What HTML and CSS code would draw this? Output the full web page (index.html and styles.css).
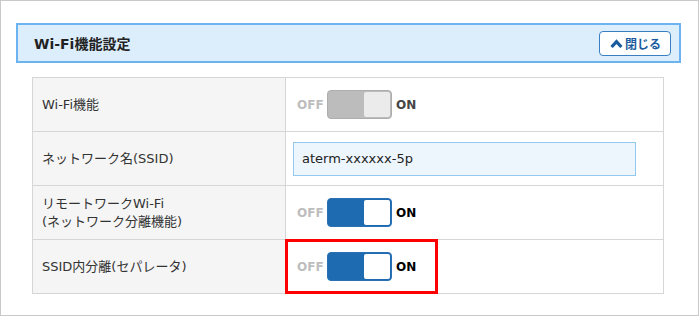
FILE: index.html
```html
<!DOCTYPE html>
<html lang="ja">
<head>
<meta charset="utf-8">
<link rel="stylesheet" href="styles.css">
</head>
<body>
<div class="frame">
  <div class="panel-header">
    <h2 class="panel-title">Wi-Fi機能設定</h2>
    <button class="close-btn" type="button">
      <svg class="chev" width="13" height="9" viewBox="0 0 13 9"><polyline points="1.6,8 6.5,2.6 11.4,8" fill="none" stroke="#1b5c9e" stroke-width="3.2" stroke-linejoin="miter"/></svg>
      <span>閉じる</span>
    </button>
  </div>
  <table class="settings">
    <tr>
      <th>Wi-Fi機能</th>
      <td>
        <div class="toggle">
          <span class="off">OFF</span>
          <span class="switch gray"><span class="knob"></span></span>
          <span class="on dim">ON</span>
        </div>
      </td>
    </tr>
    <tr>
      <th>ネットワーク名(SSID)</th>
      <td><div class="ssid">aterm-xxxxxx-5p</div></td>
    </tr>
    <tr>
      <th><span class="two-line">リモートワークWi-Fi<br>(ネットワーク分離機能)</span></th>
      <td>
        <div class="toggle">
          <span class="off">OFF</span>
          <span class="switch blue"><span class="knob"></span></span>
          <span class="on">ON</span>
        </div>
      </td>
    </tr>
    <tr>
      <th>SSID内分離(セパレータ)</th>
      <td class="marked">
        <div class="toggle">
          <span class="off">OFF</span>
          <span class="switch blue"><span class="knob"></span></span>
          <span class="on">ON</span>
        </div>
        <span class="highlight"></span>
      </td>
    </tr>
  </table>
</div>
</body>
</html>
```

FILE: styles.css
```css
* { box-sizing: border-box; }
html, body { margin: 0; padding: 0; background: #fff; }
body {
  font-family: "DejaVu Sans", "Noto Sans CJK JP", sans-serif;
  color: #333;
}
.frame {
  width: 699px;
  height: 316px;
  border: 1px solid #c9c9c9;
  padding: 22px 0 0 15px;
}
.panel-header {
  width: 665px;
  height: 40px;
  border: 2px solid #6cb4f1;
  background: #dcedfc;
  display: flex;
  align-items: center;
  justify-content: space-between;
  padding: 0 8px 0 16px;
}
.panel-title {
  margin: 0;
  font-size: 14px;
  font-weight: bold;
  color: #222;
}
.close-btn {
  width: 72px;
  height: 25px;
  border: 1px solid #3a7fc1;
  border-radius: 4px;
  background: #fff;
  display: flex;
  align-items: center;
  justify-content: center;
  gap: 2px;
  padding: 0 0 0 1px;
  font-family: "Noto Sans CJK JP", sans-serif;
  font-size: 12px;
  font-weight: bold;
  color: #1b5c9e;
}
.chev { display: block; }
.settings {
  margin: 14px 0 0 16px;
  width: 632px;
  border-collapse: collapse;
  border: 1px solid #cfcfcf;
}
.settings th, .settings td {
  border: 1px solid #d6d6d6;
  height: 54px;
  padding: 0;
  vertical-align: middle;
}
.settings th {
  width: 253px;
  background: #f5f5f5;
  text-align: left;
  font-weight: normal;
  font-size: 13px;
  line-height: 18px;
  padding-left: 9px;
  color: #333;
}
.two-line { display: block; line-height: 18px; }
.settings td { padding-left: 7px; }
.toggle {
  display: flex;
  align-items: center;
  padding-left: 4px;
  font-size: 12px;
  font-weight: bold;
}
.off { color: #bdbdbd; width: 30px; }
.on { color: #000; margin-left: 4px; }
.on.dim { color: #444; }
.switch {
  width: 65px;
  height: 29px;
  border-radius: 4px;
  border: 1px solid;
  padding: 1px;
  display: flex;
  justify-content: flex-end;
}
.switch .knob {
  width: 26px;
  height: 25px;
  border-radius: 2px;
}
.switch.gray { background: #bcbcbc; border-color: #adadad; }
.switch.gray .knob { background: #ebebeb; }
.switch.blue { background: #1f6bb1; border-color: #2a70b3; }
.switch.blue .knob { background: #fff; }
.ssid {
  width: 343px;
  height: 34px;
  border: 1px solid #93c8ef;
  background: #eef6fd;
  font-size: 13px;
  color: #222;
  display: flex;
  align-items: center;
  padding-left: 8px;
}
.marked { position: relative; }
.highlight {
  position: absolute;
  left: -1px;
  top: -1px;
  width: 153px;
  height: 55px;
  border: 3px solid #ff0000;
  pointer-events: none;
}
```
